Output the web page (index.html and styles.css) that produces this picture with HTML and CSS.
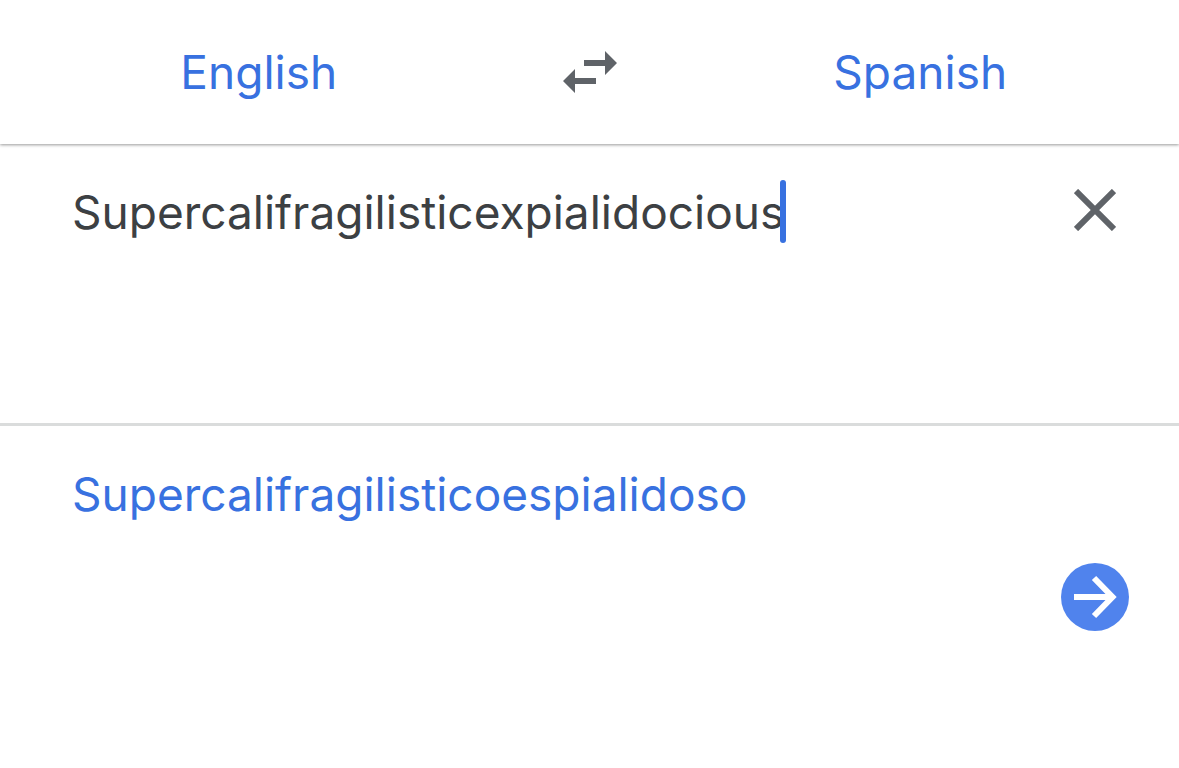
FILE: index.html
```html
<!DOCTYPE html>
<html lang="en">
<head>
<meta charset="utf-8">
<meta name="viewport" content="width=device-width, initial-scale=1">
<title>Translate</title>
<link rel="stylesheet" href="styles.css">
</head>
<body>
<header class="languages">
  <button class="language" type="button">English</button>
  <button class="icon-button" type="button" aria-label="Swap languages">
    <svg class="swap-icon" viewBox="0 0 54 42" aria-hidden="true"><path d="M42 0 54 12 42 24V15H21V9H42ZM12 18V27H33V33H12V42L0 30Z"/></svg>
  </button>
  <button class="language" type="button">Spanish</button>
</header>
<main class="translator">
  <section class="panel source">
    <div class="entry">
      <input class="text source-text" type="text" aria-label="Text to translate" value="Supercalifragilisticexpialidocious" spellcheck="false">
      <span class="caret"></span>
    </div>
    <button class="icon-button" type="button" aria-label="Clear text">
      <svg class="clear-icon" viewBox="0 0 42 42" aria-hidden="true"><path d="M2 2 40 40M40 2 2 40"/></svg>
    </button>
  </section>
  <section class="panel result">
    <p class="text result-text" lang="es">Supercalifragilisticoespialidoso</p>
    <button class="go-button" type="button" aria-label="Open translation">
      <svg class="go-icon" viewBox="0 0 68 68" aria-hidden="true"><path d="M13 34H50M33 15 51.5 34 33 53"/></svg>
    </button>
  </section>
</main>
</body>
</html>
```
FILE: styles.css
```css
* { box-sizing: border-box; }
body {
  margin: 0;
  background: #fff;
  color: #3c4043;
  font-family: Inter, "Liberation Sans", sans-serif;
  font-size: 46px;
  line-height: 64px;
}
button, input {
  margin: 0;
  padding: 0;
  border: 0;
  background: none;
  color: inherit;
  font: inherit;
}
button { cursor: pointer; }
svg { display: block; }
.languages {
  display: grid;
  grid-template-columns: 1fr 144px 1fr;
  align-items: center;
  height: 144px;
  box-shadow: 0 1px 3px #999;
}
.language { color: #3871e0; }
.icon-button { display: grid; place-items: center; }
.swap-icon { width: 54px; height: 42px; fill: #5f6368; }
.panel {
  display: flex;
  justify-content: space-between;
  padding: 36px 50px 0 72px;
}
.source { height: 282px; border-bottom: 3px solid #dadcdc; }
.entry { display: flex; flex: 1; align-items: flex-start; height: 64px; }
.source-text { field-sizing: content; outline: 0; }
.caret {
  z-index: 1;
  width: 6px;
  height: 63px;
  margin-left: -4px;
  border-radius: 3px;
  background: #3871e0;
}
.source .icon-button { width: 68px; height: 60px; }
.clear-icon { width: 42px; height: 42px; fill: none; stroke: #5f6368; stroke-width: 6; }
.text { margin: 0; }
.result { color: #3871e0; }
.go-button {
  width: 68px;
  height: 68px;
  margin-top: 101px;
  border-radius: 50%;
  background: #5083ed;
}
.go-icon { width: 68px; height: 68px; fill: none; stroke: #fff; stroke-width: 6; }
```
